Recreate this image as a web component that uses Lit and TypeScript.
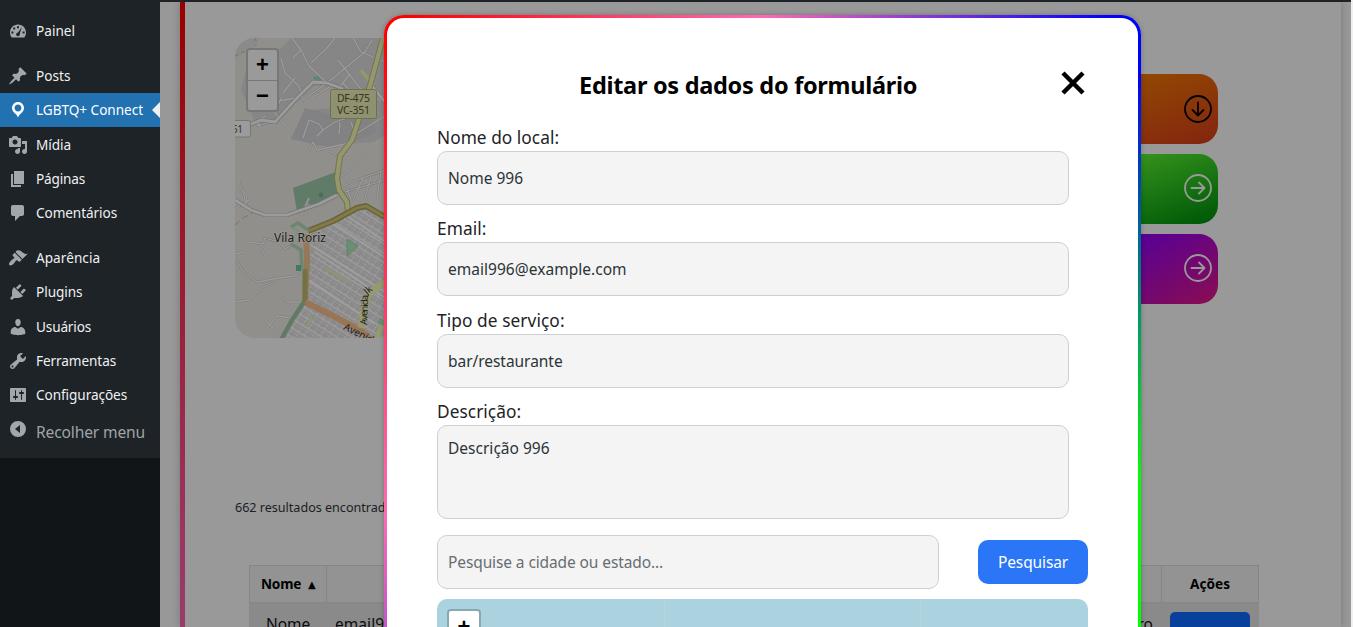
import { LitElement, html, css, svg } from "lit";
import { customElement, property } from "lit/decorators.js";

/** Text run whose tracking is adjusted so that it occupies a given width. */
@customElement("fit-text")
class FitText extends LitElement {
  @property({ type: Number }) w = 0;
  @property() text = "";
  static styles = css`
    :host { display: inline-block; white-space: pre; }
    .run { display: inline-block; }
  `;
  render() {
    return html`<span class="run">${this.text}</span>`;
  }
  firstUpdated() {
    const run = this.renderRoot.querySelector(".run") as HTMLElement;
    const natural = run.getBoundingClientRect().width;
    const n = [...this.text].length;
    if (this.w && n) run.style.letterSpacing = `${(this.w - 0.9 - natural) / n}px`;
  }
}

const t = (text: string, w: number) => html`<fit-text .text=${text} .w=${w}></fit-text>`;

const ICONS: Record<string, unknown> = {
  dash: svg`<path fill-rule="evenodd" d="M3.76 16.5h12.48c1.1-1.37 1.76-3.11 1.76-5 0-4.42-3.58-8-8-8s-8 3.58-8 8c0 1.89.66 3.63 1.76 5zM9 5.2h2v2H9zM5.2 6.6h2v2h-2zM3.4 10.6h2v2h-2zM14.6 10.6h2v2h-2zM13.9 6l-2.1 6.6c.5 1.4-.5 2.6-1.8 2.6s-2.2-1.3-1.8-2.5c.3-.8 1-1.2 1.8-1.3z"/>`,
  pin: svg`<path d="M10.44 3.02l1.82-1.82 6.36 6.35-1.83 1.82c-1.05-.68-2.48-.57-3.41.36l-.75.75c-.92.93-1.04 2.35-.35 3.41l-1.83 1.82-2.41-2.41-2.8 2.79c-.42.42-3.38 2.71-3.8 2.29s1.86-3.39 2.28-3.81l2.79-2.79L4.1 9.36l1.83-1.82c1.05.69 2.48.57 3.4-.36l.75-.75c.93-.92 1.05-2.35.36-3.41z"/>`,
  loc: svg`<path d="M10 2C6.69 2 4 4.69 4 8c0 2.02 1.17 3.71 2.53 4.89.43.37 1.18.96 1.85 1.83.74.97 1.41 2.01 1.62 2.71.21-.7.88-1.74 1.62-2.71.67-.87 1.42-1.46 1.85-1.83C14.83 11.71 16 10.02 16 8c0-3.31-2.69-6-6-6zm0 2.56c1.9 0 3.44 1.54 3.44 3.44S11.9 11.44 10 11.44 6.56 9.9 6.56 8 8.1 4.56 10 4.56z"/>`,
  media: svg`<path d="M13 11V4c0-.55-.45-1-1-1h-1.67L9 1H5L3.67 3H2c-.55 0-1 .45-1 1v7c0 .55.45 1 1 1h10c.55 0 1-.45 1-1zM7 4.5c1.38 0 2.5 1.12 2.5 2.5S8.38 9.5 7 9.5 4.5 8.38 4.5 7 5.62 4.5 7 4.5zM14 6h5v10.5c0 1.38-1.12 2.5-2.5 2.5S14 17.88 14 16.5s1.12-2.5 2.5-2.5c.17 0 .34.02.5.05V9h-3V6zm-4 8.05V13h2v3.5c0 1.38-1.12 2.5-2.5 2.5S7 17.88 7 16.5 8.12 14 9.5 14c.17 0 .34.02.5.05z"/>`,
  page: svg`<path d="M6 15V2h10v13H6zm-1 1h8v2H3V5h2v11z"/>`,
  comment: svg`<path d="M5 2h9c1.1 0 2 .9 2 2v7c0 1.1-.9 2-2 2h-2l-5 5v-5H5c-1.1 0-2-.9-2-2V4c0-1.1.9-2 2-2z"/>`,
  brush: svg`<path d="M14.48 11.06L7.41 3.99l1.5-1.5c.5-.56 2.3-.47 3.51.32 1.21.8 1.43 1.28 2.91 2.1 1.18.64 2.45 1.26 4.45.85zm-.71.71L6.7 4.7 4.93 6.47c-.39.39-.39 1.02 0 1.41l1.06 1.06c.39.39.39 1.03 0 1.42-.6.6-1.43 1.11-2.21 1.69-.35.26-.7.53-1.01.84C1.43 14.23.4 16.08 1.4 17.07c.99 1 2.84-.03 4.18-1.36.31-.31.58-.66.85-1.02.57-.78 1.08-1.61 1.69-2.21.39-.39 1.02-.39 1.41 0l1.06 1.06c.39.39 1.02.39 1.41 0z"/>`,
  plug: svg`<path d="M13.11 4.36L9.87 7.6 8 5.73l3.24-3.24c.35-.34 1.05-.2 1.56.32.52.51.66 1.21.31 1.55zm-8 1.77l.91-1.12 9.01 9.01-1.19.84c-.71.71-2.63 1.16-3.82 1.16H6.14L4.9 17.26c-.59.59-1.54.59-2.12 0-.59-.58-.59-1.53 0-2.12l1.24-1.24v-3.88c0-1.13.4-3.19 1.09-3.89zm7.26 3.97l3.24-3.24c.34-.35 1.04-.21 1.55.31.52.51.66 1.21.31 1.55l-3.24 3.25z"/>`,
  user: svg`<path d="M10 9.25c-2.27 0-2.73-3.44-2.73-3.44C7 4.02 7.82 2 9.97 2c2.16 0 2.98 2.02 2.71 3.81 0 0-.41 3.44-2.68 3.44zm0 2.57L12.72 10c2.39 0 4.52 2.33 4.52 4.53v2.49s-3.65 1.13-7.24 1.13c-3.65 0-7.24-1.13-7.24-1.13v-2.49c0-2.25 1.94-4.48 4.47-4.48z"/>`,
  tools: svg`<path d="M16.68 9.77c-1.34 1.34-3.3 1.67-4.95.99l-5.41 6.52c-.99.99-2.59.99-3.58 0s-.99-2.59 0-3.57l6.52-5.42c-.68-1.65-.35-3.61.99-4.95 1.28-1.28 3.12-1.62 4.72-1.06l-2.89 2.89 2.82 2.82 2.86-2.87c.53 1.58.18 3.39-1.08 4.65zM3.81 16.21c.4.39 1.04.39 1.43 0 .4-.4.4-1.04 0-1.43-.39-.4-1.03-.4-1.43 0-.39.39-.39 1.03 0 1.43z"/>`,
  settings: svg`<path d="M18 16V4c0-.55-.45-1-1-1H3c-.55 0-1 .45-1 1v12c0 .55.45 1 1 1h14c.55 0 1-.45 1-1zM8 11h1c.55 0 1 .45 1 1s-.45 1-1 1H8v1.5c0 .28-.22.5-.5.5s-.5-.22-.5-.5V13H6c-.55 0-1-.45-1-1s.45-1 1-1h1V5.5c0-.28.22-.5.5-.5s.5.22.5.5V11zm5-2h-1c-.55 0-1-.45-1-1s.45-1 1-1h1V5.5c0-.28.22-.5.5-.5s.5.22.5.5V7h1c.55 0 1 .45 1 1s-.45 1-1 1h-1v5.5c0 .28-.22.5-.5.5s-.5-.22-.5-.5V9z"/>`,
  collapse: svg`<path fill-rule="evenodd" d="M10 2a8 8 0 1 0 0 16 8 8 0 0 0 0-16zM12 6v8l-5-4z"/>`,
};
const icon = (n: string) => html`<svg class="ico" viewBox="0 0 20 20" fill="currentColor">${ICONS[n]}</svg>`;

interface Item { icon: string; label: string; w: number; gap?: boolean; on?: boolean }
const MENU: Item[] = [
  { icon: "dash", label: "Painel", w: 40 },
  { icon: "pin", label: "Posts", w: 35.5, gap: true },
  { icon: "loc", label: "LGBTQ+ Connect", w: 108, on: true },
  { icon: "media", label: "Mídia", w: 36 },
  { icon: "page", label: "Páginas", w: 50 },
  { icon: "comment", label: "Comentários", w: 82 },
  { icon: "brush", label: "Aparência", w: 65, gap: true },
  { icon: "plug", label: "Plugins", w: 47.5 },
  { icon: "user", label: "Usuários", w: 56 },
  { icon: "tools", label: "Ferramentas", w: 81 },
  { icon: "settings", label: "Configurações", w: 92 },
];

/** Street map of the Vila Roriz area, dimmed by the backdrop. */
@customElement("city-map")
class CityMap extends LitElement {
  static styles = css`
    * { box-sizing: border-box; }
    :host { display: block; position: relative; width: 600px; height: 300px; border-radius: 20px; overflow: hidden; background: #918f8b; }
    svg { display: block; }
    .label { font-family: "Noto Sans", sans-serif; fill: #1c1c1c; }
    .road { fill: #33361a; }
    .zoom { position: absolute; left: 11px; top: 10px; width: 33px; height: 64px; border: 2px solid #777; border-radius: 4px; background: #9a9a9a; overflow: hidden; }
    .z { height: 30px; display: grid; place-items: center; font: bold 22px/30px "Liberation Sans", sans-serif; color: #000; }
    .z + .z { border-top: 1px solid #777; }
  `;
  render() {
    const minor = [
      "M57 0L66 12L74 28L92 45L68 62L64 48L50 35L46 20M66 12L58 20M92 45L130 14L137 2M118 0L126 14L150 24M76 25L92 10L100 0M103 22L125 50M115 36L104 50L120 60L140 45M125 50L146 63M108 45L124 62M96 48L80 58",
      "M46 60L40 75L52 90M48 55L60 40M42 82L22 88L30 78M20 82L26 90M60 60L38 64",
      "M68 100L74 82L84 86L88 92L82 98M88 92L100 84L118 78L128 64M74 112L78 104L82 112L110 106L124 94L150 78M105 84L104 96M120 96L116 84",
      "M94 113L104 118L114 116M106 138L118 130L132 116M108 148L122 142L150 132M110 154L150 142M118 162L128 140M130 160L136 138M142 160L146 134M112 150L116 162M4 144L10 160",
      "M0 171L14 162M14 204L28 206L30 200L44 204L50 211L62 204M26 210L30 218M0 216L8 214M0 220L10 236L22 244L44 240L60 238L70 232M0 264L14 262L26 250L40 244M46 259L52 264L70 264M26 278L34 286L46 298M32 290L42 278L56 280M4 148L12 158L10 168M66 178L74 160M70 176L74 166M103 170L112 178",
    ];
    return html`
      <svg width="160" height="300" viewBox="0 0 160 300" fill="none" stroke-linejoin="round">
        <defs>
          <pattern id="blk" width="7" height="8" patternUnits="userSpaceOnUse" patternTransform="rotate(32)">
            <rect width="7" height="8" fill="#9c9b9b" />
            <path d="M.5 1.2h6M.5 3h5.4M.5 4.8h6M.5 6.2h5" stroke="#757372" stroke-width="1" stroke-dasharray="1.6 .6" />
          </pattern>
        </defs>
        <path d="M44 12L56 0H160V92L138 104L84 108L56 100L70 72L110 60L98 50L80 48L60 66L42 86L20 84L6 52L14 20z" fill="#868687" />
        <path d="M60 66L80 48L98 50L110 56L104 70L72 72L58 98L42 88z" fill="#918f8b" />
        <path d="M70 70L100 78L130 66L142 94L100 110L56 101z" fill="#828284" />
        <path d="M0 0H24L20 6L0 20z" fill="#8a8a8a" />
        <path d="M0 18L6 15L14 12L22 6L20 0" stroke="#86725a" stroke-dasharray="4 3" />
        <path d="M58 150L101 134L103 156L62 174z" fill="#617b69" />
        <circle cx="86" cy="157" r="2.5" fill="#4f6c58" />
        <path d="M78 39L86 37L88 42L80 43z" fill="#5f8478" />
        <path d="M72 194L131 168L160 182V300H50L68 265L72 216z" fill="url(#blk)" />
        ${minor.map((d) => svg`<path d=${d} stroke="#7d7c7b" stroke-width="2.4" /><path d=${d} stroke="#9c9b9b" stroke-width="1.3" />`)}
        ${["M14 87L26 82L40 84L60 62L78 44L92 45L106 50L126 70", "M0 162L16 172L30 177L52 177L66 172L84 166L102 157", "M137 48L150 64"].map(
          (d) => svg`<path d=${d} stroke="#747373" stroke-width="4.2" /><path d=${d} stroke="#9c9b9b" stroke-width="2.8" />`
        )}
        <path d="M0 187L8 180L18 175" stroke="#86725a" stroke-dasharray="6 4" />
        <path d="M78 208L150 254M80 214L150 260M74 242L140 286M98 186L160 226M112 178L160 210" stroke="#a09f9f" stroke-width="1.6" />
        <path d="M126 32L134 42" stroke="#97966a" stroke-width="3.5" />
        <path d="M148 0L135 48L121 90L117 102L105 118L102 140L104 152L112 164L113 174" stroke="#717348" stroke-width="6" />
        <path d="M148 0L135 48L121 90L117 102L105 118L102 140L104 152L112 164L113 174" stroke="#96976c" stroke-width="4.2" />
        <path d="M71 196L72 222L70 262" stroke="#957857" stroke-width="6" />
        <path d="M70 231L70 264" stroke="#727245" stroke-width="5" />
        <path d="M70 264L98 278L128 294L136 302" stroke="#997555" stroke-width="6" />
        <path d="M73 193L98 183L122 170L131 168L150 179" stroke="#6b6635" stroke-width="6" />
        <path d="M73 193L98 183L122 170L131 168L150 179" stroke="#847b4c" stroke-width="2.6" />
        <path d="M56 189L63 185L73 192M56 206L66 212L67 232" stroke="#6d8672" stroke-width="3.5" />
        <path d="M57 190L64 193L55 204" stroke="#7d907f" stroke-width="2" />
        <path d="M69 264L57 282L46 302" stroke="#607a66" stroke-width="4.5" />
        <path d="M61 227h5v6h-5z" fill="#3f7a64" />
        <path d="M112 201L123 208L112 218z" fill="#6b8f73" stroke="#5f8367" />
        <path d="M150 244L133 256L129 274L126 290" stroke="#97996f" stroke-width="7" />
        <path d="M148 286L141 302" stroke="#97996f" stroke-width="5" />
        <path d="M145 280l7 3-3 5-7-3z" fill="#6b8f73" />
        <path d="M72 288l5-8M90 230l24 14" stroke="#8e9478" stroke-width="3" />
        <rect x="95.5" y="51.5" width="46" height="29" rx="2" fill="#8f9170" stroke="#6f7149" />
        <text class="label road" x="102" y="64" font-size="10.5" textLength="33">DF-475</text>
        <text class="label road" x="102" y="76" font-size="10.5" textLength="33">VC-351</text>
        <rect x="-10" y="82.5" width="25.5" height="16.5" rx="2" fill="#9b9b9b" stroke="#777" />
        <text class="label road" x="-3" y="95" font-size="10" textLength="11">51</text>
        <text class="label" x="39" y="204" font-size="12" textLength="52" stroke="#9a9895" stroke-width="1.5" paint-order="stroke">Vila Roriz</text>
        <text class="label" font-size="9.5" transform="translate(132 287) rotate(-88)" textLength="30">Avenida</text>
        <text class="label" font-size="9.5" transform="translate(132 257) rotate(-40)">Jk</text>
        <text class="label" font-size="10" transform="translate(108 291) rotate(27)">Avenida</text>
      </svg>
      <div class="zoom"><div class="z">+</div><div class="z">−</div></div>
    `;
  }
}

@customElement("app-root")
class AppRoot extends LitElement {
  static styles = css`
    * { box-sizing: border-box; }
    :host { display: block; position: relative; width: 1353px; height: 627px; overflow: hidden; background: #f0f0f1; font-family: "Noto Sans", sans-serif; color: #2c3338; }
    .shell { width: 1351px; height: 627px; display: grid; grid-template: 2px 1fr / 160px 1fr; background: #989899; }
    .topbar { grid-column: 1 / 3; background: #1d2327; }
    .rail { background: #111518; }
    .menu { height: 456px; background: #1d2327; padding-top: 11.95px; color: #f0f0f1; font-size: 13.6px; }
    .item { height: 34.28px; display: flex; align-items: center; padding-left: 8px; gap: 8px; line-height: 20px; position: relative; }
    .item.gap { margin-top: 10.7px; }
    .item.on { background: #2271b1; color: #fff; }
    .item.on .ico { color: #fff; }
    .item.on::after { content: ""; margin-left: auto; border: 8px solid transparent; border-right-color: #f0f0f1; border-left: 0; }
    .ico { width: 20px; height: 20px; color: #a2a7ac; flex: none; }
    .collapse { display: flex; height: 39px; align-items: center; padding-left: 8px; gap: 8px; font-size: 15.6px; color: #a0a3a6; }
    .collapse .ico { margin-top: -6px; }
    .main { padding: 0 10px 0 20px; overflow: hidden; }
    .page { height: 100%; display: grid; grid-template-columns: 5px 1fr; background: #999; box-shadow: 0 0 8px rgba(0, 0, 0, .22); }
    .stripe { background: linear-gradient(#990000, #9a3360 520px, #993f6c); }
    .body { padding: 36px 0 0 50px; min-width: 0; }
    .top { display: flex; width: 983px; justify-content: space-between; height: 300px; }
    .cards { padding-top: 36px; display: flex; flex-direction: column; gap: 10px; }
    .card { width: 250px; height: 70px; border-radius: 19px; display: flex; justify-content: flex-end; align-items: center; padding-right: 6px; }
    .card svg { width: 28px; height: 28px; fill: none; stroke: #999; stroke-width: 1.8; stroke-linecap: round; stroke-linejoin: round; }
    .c1 { background: linear-gradient(160deg, #944d00 30%, #85270f 95%); }
    .c1 svg { stroke: #000; }
    .c2 { background: linear-gradient(160deg, #38961d 35%, #005a08 95%); }
    .c3 { background: linear-gradient(150deg, #560099 45%, #8a0d50 100%); }
    .c2, .c3 { padding-bottom: 2px; }
    .count { margin-top: 161px; height: 18px; line-height: 18px; font-size: 12.6px; color: #1a1e22; }
    .table { margin: 48px 0 0 14px; width: 1010px; }
    .tr { display: grid; grid-template-columns: 76px 835px 1fr; }
    .head { height: 38px; border: 1px solid #84868a; background: #939393; color: #000; font-weight: bold; font-size: 13.6px; }
    .head > div { display: flex; align-items: center; padding-bottom: 2px; }
    .head > div + div { border-left: 1px solid #84868a; }
    .head .h1 { padding-left: 11px; gap: 7px; }
    .h3 { justify-content: center; }
    .arrow { font: 10px "DejaVu Sans", sans-serif; padding-top: 3px; }
    .data { height: 60px; background: #8a8a8a; color: #0a0a0a; font-size: 15.5px; line-height: 22px; padding-top: 9px; }
    .d1 { padding: 1px 0 0 17px; }
    .d2 { padding: 1px 7px 0 10px; display: flex; justify-content: space-between; }
    .d3 { padding-left: 10px; }
    .btn { width: 80px; height: 30px; border-radius: 5px; background: #08419b; }
    .modal { position: absolute; left: 384px; top: 15px; width: 757px; height: 700px; border: 3px solid transparent; border-radius: 20px; padding: 0 50px;
      box-shadow: 0 0 5px rgba(0, 0, 0, .25);
      background: linear-gradient(#fff, #fff) padding-box,
        linear-gradient(90deg, #f00 3%, #ff69b4 50%, #00f 96%) top / 100% 20px no-repeat border-box,
        linear-gradient(#f00 20px, #ff69b4 500px, #c455cc 610px, #a040ff) left / 20px 100% no-repeat border-box,
        linear-gradient(#00f 60px, #0f0 460px) right / 20px 100% no-repeat border-box; }
    .bar { display: grid; grid-template-columns: 1fr; height: 107px; padding: 50px 0 0 142px; position: relative; }
    .title { font-weight: bold; font-size: 23.5px; line-height: 34px; color: #000; }
    .close { position: absolute; left: 624px; top: 53px; width: 24px; height: 24px; }
    .label { height: 26px; line-height: 26px; font-size: 17.3px; color: #1d2327; }
    .field { width: 632px; height: 54px; border: 1px solid #cfcfcf; border-radius: 10px; background: #f4f4f4; padding: 14px 10px; font-size: 15.5px; line-height: 24px; color: #2c3338; margin-bottom: 11.4px; }
    .area { height: 94px; padding-top: 10px; margin-bottom: 16px; }
    .label, .field { display: block; }
    .search { display: flex; align-items: center; justify-content: space-between; width: 651px; height: 54px; margin-bottom: 10px; }
    .search .field { width: 502px; margin: 0; color: #686d72; }
    .go { width: 110px; height: 44px; border-radius: 10px; background: #2a76f6; color: #fff; display: grid; place-items: center; font-size: 15.5px; }
    .sea { width: 651px; height: 120px; border-radius: 10px; background: linear-gradient(90deg, transparent 227px, #b4d5dd 227px 228px, transparent 228px 483px, #b4d5dd 483px 484px, transparent 484px), #aad3df; padding: 10px; }
    .plus { width: 34px; height: 60px; border: 2px solid #88a9b2; border-radius: 4px; background: #fff; font: bold 22px/31px "Liberation Sans", sans-serif; text-align: center; color: #000; }
  `;

  render() {
    const right = svg`<circle cx="14" cy="14" r="13" /><path d="M7.5 14H20.5M15 8.5L20.5 14L15 19.5" />`;
    return html`
      <div class="shell">
        <div class="topbar"></div>
        <div class="rail">
          <div class="menu">
            ${MENU.map((m) => html`<div class="item ${m.gap ? "gap" : ""} ${m.on ? "on" : ""}">${icon(m.icon)}${t(m.label, m.w)}</div>`)}
            <div class="collapse">${icon("collapse")}${t("Recolher menu", 110)}</div>
          </div>
        </div>
        <div class="main">
          <div class="page">
            <div class="stripe"></div>
            <div class="body">
              <div class="top">
                <city-map></city-map>
                <div class="cards">
                  <div class="card c1"><svg viewBox="0 0 28 28"><circle cx="14" cy="14" r="13" /><path d="M14 7.5V20.5M8.5 15L14 20.5L19.5 15" /></svg></div>
                  <div class="card c2"><svg viewBox="0 0 28 28">${right}</svg></div>
                  <div class="card c3"><svg viewBox="0 0 28 28">${right}</svg></div>
                </div>
              </div>
              <div class="count">${t("662 resultados encontrados", 165)}</div>
              <div class="table">
                <div class="tr head">
                  <div class="h1">${t("Nome", 41)}<span class="arrow">▲</span></div>
                  <div></div>
                  <div class="h3">${t("Ações", 41)}</div>
                </div>
                <div class="tr data">
                  <div class="d1">${t("Nome", 45)}</div>
                  <div class="d2">${t("email996@example.com", 180)}<span>ro</span></div>
                  <div class="d3"><div class="btn"></div></div>
                </div>
              </div>
            </div>
          </div>
        </div>
      </div>
      <div class="modal">
        <div class="bar">
          <div class="title">${t("Editar os dados do formulário", 339)}</div>
          <svg class="close" viewBox="0 0 24 24"><path d="M2 2L22 22M22 2L2 22" stroke="#000" stroke-width="4.5" /></svg>
        </div>
        <div class="label">${t("Nome do local:", 123)}</div>
        <div class="field">${t("Nome 996", 76)}</div>
        <div class="label">${t("Email:", 50.5)}</div>
        <div class="field">${t("email996@example.com", 179.5)}</div>
        <div class="label">${t("Tipo de serviço:", 128.5)}</div>
        <div class="field">${t("bar/restaurante", 115.5)}</div>
        <div class="label">${t("Descrição:", 85)}</div>
        <div class="field area">${t("Descrição 996", 102.5)}</div>
        <div class="search">
          <div class="field">${t("Pesquise a cidade ou estado...", 216)}</div>
          <div class="go">${t("Pesquisar", 71)}</div>
        </div>
        <div class="sea"><div class="plus">+</div></div>
      </div>
    `;
  }
}
